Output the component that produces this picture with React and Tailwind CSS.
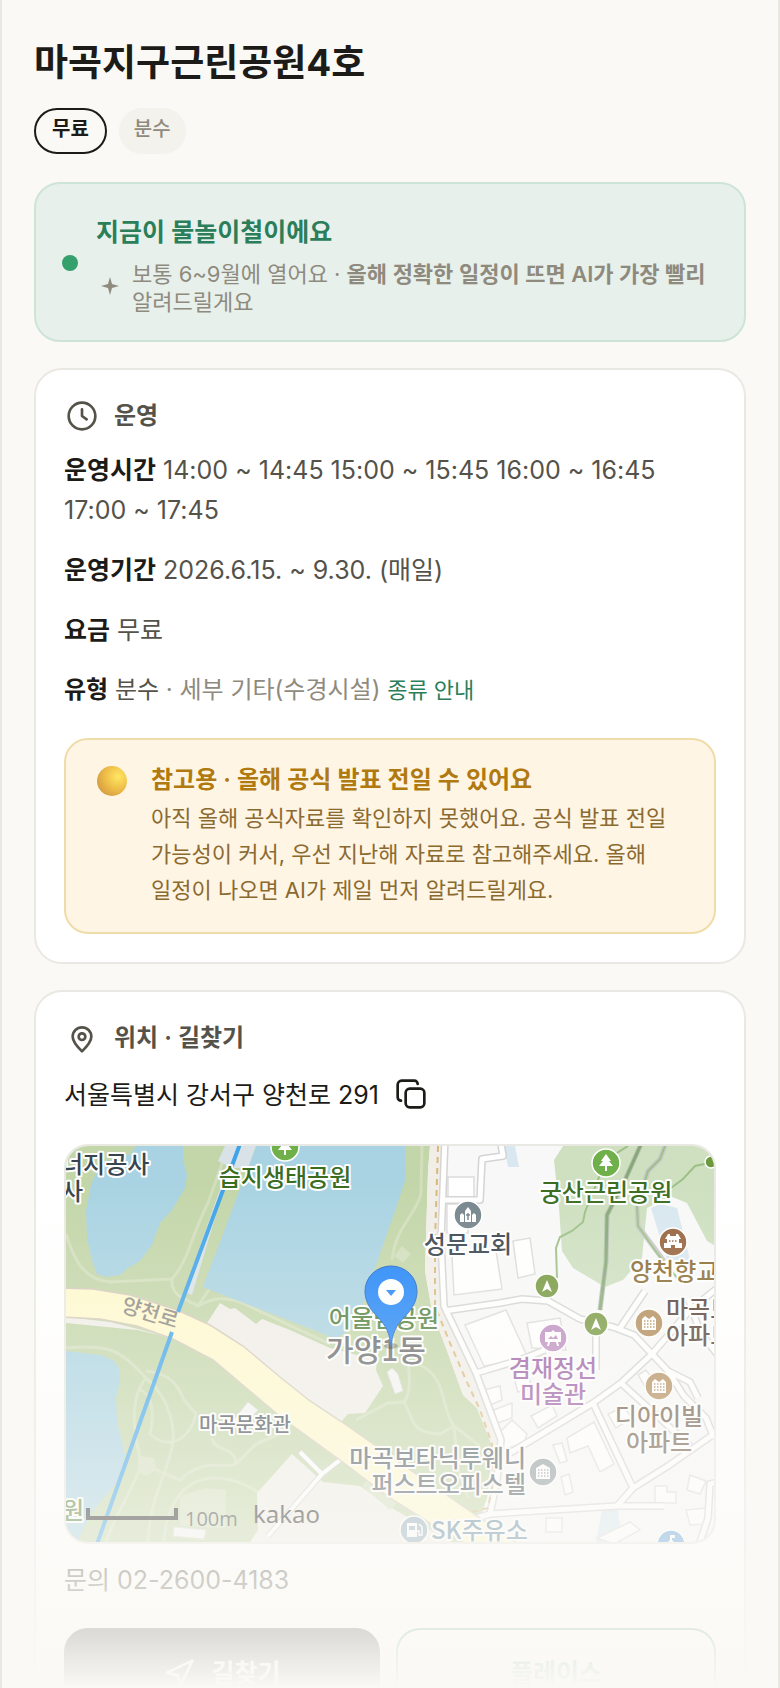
import { Navigation } from "lucide-react";

const OPERATING_ROWS = [
  { label: "운영시간", value: "14:00 ~ 14:45 15:00 ~ 15:45 16:00 ~ 16:45 17:00 ~ 17:45" },
  { label: "운영기간", value: "2026.6.15. ~ 9.30. (매일)" },
  { label: "요금", value: "무료" },
];

const ROADS = [
  "M445 1140L441 1243L444 1308L476 1375L501 1442L497 1482L490 1516L470 1522",
  "M444 1313L500 1305L522 1301L548 1303L580 1321L613 1329L634 1337L652 1356L668 1373L690 1384L698 1400",
  "M668 1373L684 1398L706 1420L714 1440",
  "M652 1356L621 1385L593 1405L510 1455",
  "M593 1405L633 1490L617 1508",
  "M621 1385L664 1424L690 1448",
  "M714 1436L668 1468L633 1490",
  "M490 1516L617 1508L664 1508",
  "M645 1293L620 1330",
  "M652 1356L690 1312L720 1288",
  "M444 1202L480 1202L482 1161L503 1158L500 1140",
  "M476 1375L520 1362L545 1352",
  "M596 1336L596 1372",
  "M688 1300L700 1334L720 1360",
  "M718 1484L710 1486L708 1520L700 1544",
];

const BUILDINGS = [
  "M448 1179H474V1199H448Z",
  "M447 1206H468V1235H447Z",
  "M452 1258L496 1253L502 1291L454 1297Z",
  "M465 1327L506 1312L528 1360L484 1368Z",
  "M513 1243L530 1240L535 1276L518 1280Z",
  "M527 1325L560 1320L566 1352L532 1350Z",
  "M484 1392L500 1388L502 1402L488 1408Z",
  "M491 1413L512 1405L512 1420L494 1426Z",
  "M500 1434L512 1422L527 1436L524 1445L502 1452Z",
  "M531 1418L552 1407L557 1418L538 1430Z",
  "M567 1440L594 1424L614 1466L600 1474L588 1448L570 1455Z",
  "M553 1447L562 1445L567 1463L560 1465Z",
  "M561 1479L569 1476L573 1494L565 1497Z",
  "M546 1520H562V1534H546Z",
  "M655 1488H667V1494H676V1505H655Z",
  "M690 1477L706 1483L700 1496L687 1492Z",
  "M686 1512L706 1510V1526L690 1527Z",
  "M638 1377L646 1372L655 1384L646 1390Z",
  "M608 1416L624 1409L632 1420L616 1430Z",
  "M514 1380L528 1376L532 1390L518 1394Z",
  "M597 1540L630 1524L640 1532L614 1546Z",
];

const PARK_TRAILS = [
  "M66 1236C74 1262 84 1282 110 1284L172 1281C190 1260 190 1240 208 1205L224 1160",
  "M172 1281C170 1300 190 1302 198 1308L210 1290M198 1308C216 1298 226 1300 240 1304L330 1346",
  "M422 1148L421 1196C414 1220 396 1228 392 1262",
  "M66 1350C110 1346 120 1352 146 1380C170 1400 176 1430 172 1450C165 1480 150 1500 148 1544",
  "M146 1373C172 1376 178 1388 184 1402L196 1416C190 1440 170 1454 150 1436C156 1410 150 1396 139 1391",
  "M146 1380C128 1402 134 1440 142 1466C128 1500 114 1520 106 1544",
  "M142 1466L180 1482C206 1458 222 1472 236 1466L256 1446M164 1544C166 1500 190 1480 214 1480C240 1480 260 1494 270 1504",
  "M236 1466C236 1448 214 1454 212 1440M256 1446L284 1434",
  "M405 1352C410 1370 412 1394 404 1404L388 1405L356 1422M404 1404C414 1420 410 1436 440 1436L454 1428",
  "M420 1367C448 1380 440 1410 454 1428L480 1448M454 1428L458 1470L468 1500",
];

const HILL_TRAILS = [
  "M628 1148L606 1162L585 1214L583 1224L572 1233L560 1239L556 1250L557 1280",
  "M714 1164L695 1168L683 1181L671 1190",
  "M668 1140L660 1161L648 1173L637 1208L638 1228L657 1255L678 1281",
];

function Place({ x, y, fill, r = 14, children }) {
  return (
    <g transform={`translate(${x} ${y})`}>
      <circle r={r} fill={fill} stroke="#fff" strokeWidth="1.5" />
      {children}
    </g>
  );
}

function Label({ x, y, fill, size = 24, anchor = "middle", children }) {
  return (
    <text
      x={x}
      y={y}
      fill={fill}
      fontSize={size}
      textAnchor={anchor}
      fontWeight="500"
      stroke="#fff"
      strokeWidth="4"
      strokeLinejoin="round"
      paintOrder="stroke"
    >
      {children}
    </text>
  );
}

const Tree = () => <path d="M0 -9L5 -2H3L7 3H1V8H-1V3H-7L-3 -2H-5Z" fill="#fff" />;
const Arrow = () => <path d="M0 -6L5 6L0 3L-5 6Z" fill="#fff" />;

function Apartment({ color }) {
  return (
    <>
      <path d="M-7 7V-4L-4 -7L0 -4L4 -7L7 -4V7Z" fill="#fff" />
      <path d="M-5 -2H6M-5 1H6M-5 4H6" stroke={color} strokeWidth="1.5" strokeDasharray="1.5 1.5" />
    </>
  );
}

function ParkMap() {
  return (
    <svg
      viewBox="66 1148 648 396"
      preserveAspectRatio="xMidYMid slice"
      className="block h-[396px] w-full font-['Noto_Sans_CJK_KR',sans-serif]"
      role="img"
      aria-label="마곡지구근린공원4호 지도"
    >
      {/* Ground: park on the left, town on the right */}
      <path d="M66 1148H714V1544H66Z" fill="#c3d6a9" />
      <path d="M430 1148L428 1173L425 1273L432 1313L446 1350L463 1397L477 1410L493 1450L487 1500L480 1520L500 1544H714V1148Z" fill="#f8f8f8" />
      <path d="M430 1148L428 1173L425 1273L432 1313L446 1350L463 1397L477 1410L493 1450L490 1480L497 1480L499 1442L474 1378L440 1308L437 1243L441 1148Z" fill="#f1eee8" />

      <g fill="none" stroke="#d2dfbd" strokeWidth="3">
        {PARK_TRAILS.map((d) => <path key={d} d={d} />)}
      </g>
      <path d="M402 1248L411 1256L403 1265L394 1258ZM138 1458L154 1460L156 1472L146 1478L138 1474ZM180 1498L206 1490L226 1492V1530L180 1528Z" fill="#d2dfbd" />

      {/* Water */}
      <g fill="#a9d3e2">
        <path d="M136 1148H183V1162L187 1177L185 1190L172 1212L160 1225L152 1247L140 1263L128 1270L120 1277L105 1279L97 1276L92 1263L87 1240L86 1212L91 1187L100 1165L130 1156Z" />
        <path d="M256 1148L203 1289L280 1319L336 1341L352 1330L362 1310L375 1270L395 1213L406 1180L405 1148Z" />
        <path d="M66 1353L100 1357L113 1362L119 1370L120 1383L116 1400L117 1423L125 1457L118 1483L93 1513L82 1533L78 1544H66Z" />
      </g>

      {/* Open land around the main road */}
      <g fill="#f1eee8">
        <path d="M207 1325L220 1305L230 1311L235 1310L256 1326L262 1321L290 1332L330 1350L377 1362L376 1372L383 1388L365 1415L348 1416L341 1424L290 1388L243 1348Z" />
        <path d="M257 1495L292 1456L323 1484L360 1488L395 1512L480 1560H240L258 1532Z" />
        <path d="M66 1319L110 1324L173 1340L137 1332L66 1325Z" />
      </g>
      <path d="M248 1404L258 1412L242 1430L232 1424ZM387 1374L392 1370L398 1376L403 1393L395 1396ZM174 1529L206 1532L204 1541L173 1538Z" fill="#f4f4f4" stroke="#d9dcd2" strokeWidth="1" />
      <path d="M300 1454L322 1476L268 1538M322 1476L340 1462" fill="none" stroke="#cfd3cb" strokeWidth="6" />
      <path d="M300 1454L322 1476L268 1538M322 1476L340 1462" fill="none" stroke="#fff" strokeWidth="4" />
      <path d="M362 1488L368 1480L398 1504L390 1512Z" fill="#d2dfbd" />

      {/* Hill park */}
      <path d="M563 1148L554 1162L559 1210L562 1253L573 1270L605 1289L623 1282L642 1260L647 1210L670 1198L687 1205L707 1243L714 1247V1148Z" fill="#cee0c0" />
      <path d="M651 1210L660 1206L677 1210L690 1262L667 1262ZM504 1148H515L519 1169H508ZM596 1544L602 1512H618L622 1544Z" fill="#d8e7f0" />
      <path d="M668 1140L660 1161L648 1173L637 1208L638 1228L664 1263" fill="none" stroke="#c8c9c9" strokeWidth="5" />
      <g fill="none" stroke="#9dc087" strokeWidth="2">
        {HILL_TRAILS.map((d) => <path key={d} d={d} />)}
      </g>
      <path d="M642 1144L625 1182L607 1217L606 1264L600 1312" fill="none" stroke="#b9c2b5" strokeWidth="5" />
      <path d="M642 1144L625 1182L607 1217L606 1264L600 1312" fill="none" stroke="#86a977" strokeWidth="3" />

      {/* Town */}
      <g fill="#fff" stroke="#dcdcdc" strokeWidth="1.5">
        {BUILDINGS.map((d) => <path key={d} d={d} />)}
      </g>
      <g fill="none" stroke="#d4d4d4" strokeWidth="8" strokeLinejoin="round">
        {ROADS.map((d) => <path key={d} d={d} />)}
      </g>
      <g fill="none" stroke="#fff" strokeWidth="5" strokeLinejoin="round">
        {ROADS.map((d) => <path key={d} d={d} />)}
      </g>
      <path d="M438 1148L435 1243L435 1308L450 1345L466 1382L480 1412L492 1446L494 1480L488 1510L472 1514" fill="none" stroke="#d9b878" strokeWidth="2" strokeDasharray="6 5" />

      {/* Main road */}
      <path
        d="M60 1290L93 1291L130 1297L177 1312L210 1327L243 1348L280 1379L310 1403L342 1424L400 1465L480 1520L530 1554H480L433 1527L390 1500L340 1462L282 1420L213 1362L173 1341L137 1328L100 1321L60 1319Z"
        fill="#fff9cd"
        stroke="#d3cbbb"
        strokeWidth="1.5"
      />

      {/* Rail line over its bridge */}
      <path d="M225 1148H256L248 1170L230 1170L192 1297L184 1294L228 1168L218 1163Z" fill="#d9e2e6" />
      <path d="M240 1146L178 1314M172 1334L97 1546" stroke="#3ea3e8" strokeWidth="4" />

      <text x="148" y="1322" fontSize="21" fill="#8c8983" fontWeight="500" transform="rotate(17 148 1322)" textAnchor="middle">
        양천로
      </text>

      <Place x={285} y={1149} fill="#6fb04a"><Tree /></Place>
      <Place x={606} y={1165} fill="#6fb04a"><Tree /></Place>
      <Place x={711} y={1164} r={6} fill="#6d9a3a" />
      <Place x={547} y={1288} r={12} fill="#75983f"><Arrow /></Place>
      <Place x={596} y={1326} r={12} fill="#75983f"><Arrow /></Place>
      <Place x={468} y={1217} fill="#76858c">
        <path d="M-8 7V0L-6 -2L-4 0V7ZM-3 7V-4L0 -8L3 -4V7ZM4 7V0L6 -2L8 0V7Z" fill="#fff" />
        <path d="M0 -2V5M-2 0H2" stroke="#76858c" strokeWidth="1.5" />
      </Place>
      <Place x={673} y={1244} fill="#96633e">
        <path d="M-5 -8H-3V-6H3V-8H5L8 -3H6V1H9V6H2V3H-2V6H-9V1H-6V-3H-8Z" fill="#fff" />
        <path d="M-4 -1H5" stroke="#96633e" strokeWidth="1.5" strokeDasharray="1.5 1.5" />
      </Place>
      <Place x={649} y={1325} fill="#b18a58"><Apartment color="#b18a58" /></Place>
      <Place x={659} y={1388} fill="#b18a58"><Apartment color="#b18a58" /></Place>
      <Place x={553} y={1340} fill="#bd8bc0">
        <path d="M-8 -6H-2L0 -8L2 -6H8V4H5L6 8H4L3 4H-3L-4 8H-6L-5 4H-8Z" fill="#fff" />
        <path d="M-5 1L-2 -2L0 0L3 -3L5 1Z" fill="#bd8bc0" />
      </Place>
      <Place x={543} y={1474} fill="#8a969b">
        <path d="M-7 7V-4L0 -8L7 -4V7Z" fill="#fff" />
        <path d="M-5 -2H6M-5 1H6M-5 4H6" stroke="#8a969b" strokeWidth="1.5" strokeDasharray="1.5 1.5" />
      </Place>
      <Place x={414} y={1532} fill="#8fa9b8">
        <path d="M-7 -7H3V7H-7Z" fill="#fff" />
        <path d="M-5 -4H1V0H-5Z" fill="#8fa9b8" />
        <path d="M3 1H5V5H8V-3L5 -6" fill="none" stroke="#fff" strokeWidth="1.5" />
      </Place>
      <Place x={671} y={1546} fill="#5d9fdb">
        <path d="M0 -9H4V-6H1V-4L5 0V8H-5V0L-1 -4V-9Z" fill="#fff" />
      </Place>

      <Label x={61} y={1175} anchor="start" fill="#39454e">너지공사</Label>
      <Label x={61} y={1202} anchor="start" fill="#39454e">사</Label>
      <Label x={285} y={1188} fill="#3a6d1f">습지생태공원</Label>
      <Label x={606} y={1203} fill="#3a6d1f">궁산근린공원</Label>
      <Label x={468} y={1255} fill="#39454e">성문교회</Label>
      <Label x={630} y={1282} anchor="start" fill="#8a6c33">양천향교</Label>
      <Label x={666} y={1320} anchor="start" fill="#543c30">마곡보</Label>
      <Label x={666} y={1346} anchor="start" fill="#543c30">아파트</Label>
      <Label x={384} y={1329} fill="#4d7e39">어울림공원</Label>
      <Label x={376} y={1363} size={30} fill="#66676a">가양1동</Label>
      <Label x={553} y={1379} fill="#9a5ba4">겸재정선</Label>
      <Label x={553} y={1405} fill="#9a5ba4">미술관</Label>
      <Label x={659} y={1427} fill="#6f5847">디아이빌</Label>
      <Label x={659} y={1453} fill="#6f5847">아파트</Label>
      <Label x={245} y={1434} size={20} fill="#3e4850">마곡문화관</Label>
      <Label x={526} y={1469} anchor="end" fill="#4a555c">마곡보타닉투웨니</Label>
      <Label x={526} y={1495} anchor="end" fill="#4a555c">퍼스트오피스텔</Label>
      <Label x={431} y={1541} anchor="start" fill="#5c8499">SK주유소</Label>
      <Label x={62} y={1521} anchor="start" fill="#4c8038">원</Label>

      <path d="M88 1510V1520H176V1510" fill="none" stroke="#1f1f1f" strokeWidth="4" />
      <text x="185" y="1528" fontSize="20" fill="#3c3c3c" className="font-['Open_Sans',sans-serif]">100m</text>
      <text x="253" y="1525" fontSize="24" fill="#222" className="font-['Noto_Sans',sans-serif]">kakao</text>

      {/* Selected place */}
      <ellipse cx="391" cy="1348" rx="7" ry="3" fill="#000" opacity="0.3" />
      <path d="M391 1348C389 1330 383 1325 374 1315C368 1308 365 1301 365 1293A26 25 0 0 1 417 1293C417 1301 414 1308 408 1315C399 1325 393 1330 391 1348Z" fill="#1f84f8" stroke="#1f62c0" strokeWidth="1" />
      <circle cx="391" cy="1294" r="13" fill="#fff" />
      <path d="M386 1292H396L391 1298Z" fill="#1f84f8" />
    </svg>
  );
}

function LineIcon({ children }) {
  return (
    <svg
      viewBox="0 0 24 24"
      className="size-8 shrink-0"
      fill="none"
      stroke="currentColor"
      strokeWidth="2"
      strokeLinecap="round"
      strokeLinejoin="round"
      aria-hidden="true"
    >
      {children}
    </svg>
  );
}

function ClockIcon() {
  return (
    <LineIcon>
      <circle cx="12" cy="12" r="10" />
      <path d="M12 7V12L15.5 14.5" />
    </LineIcon>
  );
}

function PinIcon() {
  return (
    <LineIcon>
      <path d="M12 22C8 18 5 14.5 5 11A7 7 0 0 1 19 11C19 14.5 16 18 12 22Z" />
      <circle cx="12" cy="11" r="2.5" />
    </LineIcon>
  );
}

function CopyIcon() {
  return (
    <LineIcon>
      <rect x="8" y="8" width="14" height="14" rx="3" />
      <path d="M4.5 17A2.5 2.5 0 0 1 2 14.5V5A3 3 0 0 1 5 2H14.5A2.5 2.5 0 0 1 17 4.5" />
    </LineIcon>
  );
}

function Card({ icon: Icon, title, children }) {
  return (
    <section className="rounded-[28px] border-2 border-[#eae8e2] bg-white p-7">
      <h2 className="flex items-center gap-4 pl-[2px] text-[24px] leading-9 font-semibold text-[#55524a]">
        <Icon />
        {title}
      </h2>
      {children}
    </section>
  );
}

function OperatingInfo() {
  return (
    <Card icon={ClockIcon} title="운영">
      <div className="mt-4 space-y-5 text-[25px] leading-10 text-[#55524a]">
        {OPERATING_ROWS.map((row) => (
          <p key={row.label}>
            <strong className="font-semibold text-[#1c1b17]">{row.label}</strong> {row.value}
          </p>
        ))}
        <p className="text-[24px]">
          <strong className="font-semibold text-[#1c1b17]">유형</strong> 분수{" "}
          <span className="text-[#8f8a7e]">· 세부 기타(수경시설)</span>{" "}
          <a href="#types" className="text-[22px] text-[#2b7e5a]">종류 안내</a>
        </p>
      </div>

      <div className="mt-7 flex gap-6 rounded-3xl border-2 border-[#f0dca8] bg-[#fff5e4] py-6 pr-10 pl-[31px]">
        <span className="mt-[2px] size-[30px] shrink-0 rounded-full bg-[radial-gradient(circle_at_70%_35%,#ffe762_0%,#eebd48_45%,#d49c42_80%,#dc7c60_100%)]" />
        <div>
          <h3 className="text-[24px] leading-8 font-semibold text-[#b07a10]">참고용 · 올해 공식 발표 전일 수 있어요</h3>
          <p className="mt-1 text-[22px] leading-9 text-[#8b6a30]">
            아직 올해 공식자료를 확인하지 못했어요. 공식 발표 전일 가능성이 커서, 우선 지난해 자료로 참고해주세요. 올해 일정이 나오면 AI가 제일 먼저 알려드릴게요.
          </p>
        </div>
      </div>
    </Card>
  );
}

function LocationInfo() {
  return (
    <Card icon={PinIcon} title="위치 · 길찾기">
      <div className="mt-4 flex h-16 items-center gap-4 pb-4 text-[25px] text-[#1c1b17]">
        <span>서울특별시 강서구 양천로 291</span>
        <button type="button" aria-label="주소 복사" className="pb-1">
          <CopyIcon />
        </button>
      </div>

      <div className="mt-2 overflow-hidden rounded-3xl border-2 border-[#eae8e2]">
        <ParkMap />
      </div>

      <p className="mt-4 text-[25px] leading-10 text-[#55524a]">문의 02-2600-4183</p>

      <div className="mt-7 flex gap-4">
        <button type="button" className="flex h-[92px] flex-1 items-center justify-center gap-4 rounded-3xl bg-[#1c1b17] text-[25px] font-bold text-white">
          <Navigation size={32} strokeWidth={2} aria-hidden="true" />
          길찾기
        </button>
        <button type="button" className="h-[92px] flex-1 rounded-3xl border-2 border-[#2b7e5a]/80 bg-white text-[25px] font-bold text-[#2b7e5a]">
          플레이스
        </button>
      </div>
    </Card>
  );
}

export default function App() {
  return (
    <main className="relative h-screen overflow-hidden border-x-2 border-[#eae8e2] bg-[#faf9f5] px-8 pt-[38px] font-['Inter','Noto_Sans_CJK_KR',sans-serif] break-keep">
      <h1 className="text-[37px] leading-[50px] font-bold text-[#1c1b17]">마곡지구근린공원4호</h1>

      <div className="mt-5 flex gap-3 text-[20px] leading-[38px]">
        <span className="h-[46px] rounded-[23px] border-2 border-[#1c1b17] px-4 font-semibold text-[#1c1b17]">무료</span>
        <span className="h-[46px] rounded-[23px] border-2 border-[#f3f2ed] bg-[#f3f2ed] px-[13px] font-medium text-[#8f8a7e]">분수</span>
      </div>

      <div className="mt-7 flex flex-col gap-[26px]">
        <section className="flex items-center gap-[18px] rounded-[26px] border-2 border-[#cde4d7] bg-[#e7f0eb] pt-[26px] pr-7 pb-6 pl-[26px]">
          <span className="size-4 shrink-0 rounded-full bg-[#34a06c]" />
          <div>
            <h2 className="text-[25px] leading-11 font-semibold text-[#2b7e5a]">지금이 물놀이철이에요</h2>
            <div className="mt-[6px] flex items-center gap-2 text-[#8f8a7e]">
              <svg viewBox="0 0 28 28" className="mb-1 size-7 shrink-0" aria-hidden="true">
                <path d="M14 5L16 12L23 14L16 16L14 23L12 16L5 14L12 12Z" fill="currentColor" />
              </svg>
              <p className="text-[22px] leading-7">
                보통 6~9월에 열어요 · <strong className="font-semibold">올해 정확한 일정이 뜨면 AI가 가장 빨리</strong> 알려드릴게요
              </p>
            </div>
          </div>
        </section>

        <OperatingInfo />
        <LocationInfo />
      </div>

      {/* Preview fade */}
      <div className="pointer-events-none absolute -inset-x-[2px] bottom-0 h-[30%] bg-[linear-gradient(to_bottom,#faf9f500_0%,#faf9f547_31%,#faf9f5a6_71%,#faf9f5e0_90%,#faf9f5_100%)]" />
    </main>
  );
}
